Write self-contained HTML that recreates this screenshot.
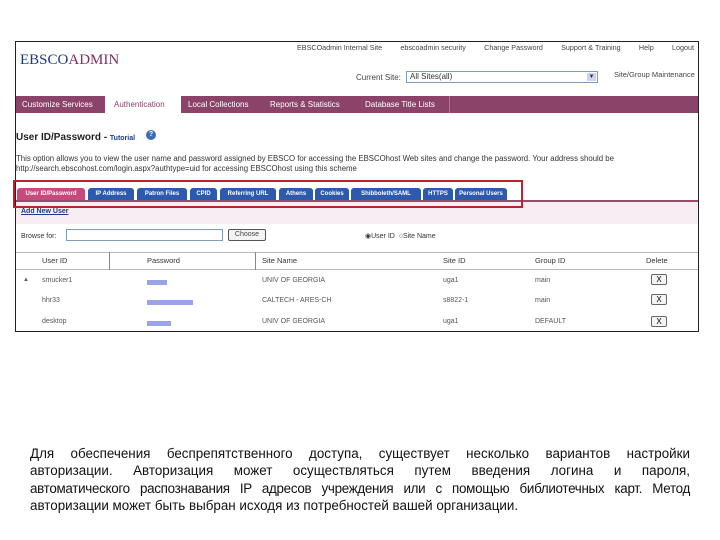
<!DOCTYPE html>
<html><head><meta charset="utf-8"><style>
*{margin:0;padding:0;box-sizing:border-box}
body{width:720px;height:540px;background:#fff;position:relative;font-family:"Liberation Sans",sans-serif;overflow:hidden}
.a{position:absolute;white-space:nowrap}
.f{position:absolute;left:15px;top:41px;width:684px;height:291px;border:1px solid #222;overflow:hidden}
.s{font-size:7.5px;color:#444}
.nav{position:absolute;left:0;top:54px;width:682px;height:17px;background:#8c4369}
.nav span{position:absolute;top:4px;font-size:8px;color:#fff}
.tab{position:absolute;top:146px;height:12px;background:#2c5aae;color:#fff;font-size:6px;font-weight:bold;text-align:center;line-height:12px;border-radius:3px 3px 0 0}
.th{font-size:7.5px;color:#333}
.td{font-size:7px;color:#555}
.x{position:absolute;width:16px;height:11px;border:1px solid #666;border-radius:2px;font-size:8px;text-align:center;line-height:9px;background:#f4f4f4}
.bl{position:absolute;height:5px;background:#9aa3e8}
.t{position:absolute;left:30px;width:660px;font-size:13.4px;color:#111;white-space:nowrap;text-align:justify;text-align-last:justify}
.top{position:absolute;left:281px;top:1px;width:397px;display:flex;justify-content:space-between;font-size:7.2px;color:#444;white-space:nowrap}
</style></head><body>
<div class="f">
 <div class="top"><span>EBSCOadmin Internal Site</span><span>ebscoadmin security</span><span>Change Password</span><span>Support &amp; Training</span><span>Help</span><span>Logout</span></div>
 <div class="a" style="left:4px;top:10px;font-family:'Liberation Serif',serif;font-size:15px;color:#1e3a7a">EBSCO<span style="color:#7a3060">ADMIN</span></div>
 <div class="a s" style="left:340px;top:31px;font-size:8px">Current Site:</div>
 <div class="a" style="left:390px;top:29px;width:192px;height:12px;border:1px solid #7f9db9;font-size:8px;color:#333;padding-left:3px;line-height:10px">All Sites(all)<span style="position:absolute;right:1px;top:1px;width:9px;height:8px;background:#c6d6f0;font-size:6px;text-align:center;line-height:8px">▼</span></div>
 <div class="a s" style="left:598px;top:28px;font-size:7.5px">Site/Group Maintenance</div>
 <div class="nav">
  <span style="left:6px">Customize Services</span>
  <div style="position:absolute;left:89px;top:0;width:76px;height:17px;background:#fff"></div>
  <span style="left:98px;color:#8c4369">Authentication</span>
  <span style="left:172px">Local Collections</span>
  <span style="left:254px">Reports &amp; Statistics</span>
  <span style="left:349px">Database Title Lists</span>
  <div style="position:absolute;left:433px;top:0;width:1px;height:17px;background:#b07090"></div>
 </div>
 <div class="a" style="left:0;top:90px;font-size:10px;font-weight:bold;color:#222">User ID/Password - <span style="font-size:7px;color:#1e3a8a">Tutorial</span></div>
 <div class="a" style="left:130px;top:88px;width:10px;height:10px;border-radius:50%;background:#3a6fb8;color:#fff;font-size:7px;text-align:center;line-height:10px;font-weight:bold">?</div>
 <div class="a s" style="left:0;top:112px;font-size:7.8px;color:#333">This option allows you to view the user name and password assigned by EBSCO for accessing the EBSCOhost Web sites and change the password. Your address should be</div>
 <div class="a s" style="left:0;top:122px;font-size:7.8px;color:#333">http://search.ebscohost.com/login.aspx?authtype=uid for accessing EBSCOhost using this scheme</div>
 <div style="position:absolute;left:0;top:158px;width:682px;height:2px;background:#9c4a6c"></div>
 <div style="position:absolute;left:0;top:160px;width:682px;height:22px;background:#f7eef4"></div>
 <div class="tab" style="left:1px;width:68px;background:#c84a7c">User ID/Password</div>
 <div class="tab" style="left:72px;width:46px">IP Address</div>
 <div class="tab" style="left:121px;width:50px">Patron Files</div>
 <div class="tab" style="left:174px;width:27px">CPID</div>
 <div class="tab" style="left:204px;width:56px">Referring URL</div>
 <div class="tab" style="left:263px;width:34px">Athens</div>
 <div class="tab" style="left:299px;width:34px">Cookies</div>
 <div class="tab" style="left:335px;width:70px">Shibboleth/SAML</div>
 <div class="tab" style="left:407px;width:30px">HTTPS</div>
 <div class="tab" style="left:439px;width:52px">Personal Users</div>
 <div class="a" style="left:5px;top:166px;font-size:7px;color:#1e3a8a;text-decoration:underline;font-weight:bold">Add New User</div>
 <div class="a" style="left:5px;top:191px;font-size:7px;color:#333">Browse for:</div>
 <div class="a" style="left:50px;top:187px;width:157px;height:12px;border:1px solid #7f9db9"></div>
 <div class="a" style="left:212px;top:187px;width:38px;height:12px;border:1px solid #555;border-radius:2px;font-size:7px;text-align:center;line-height:10px;color:#444;background:#f4f4f4">Choose</div>
 <div class="a" style="left:349px;top:190px;font-size:7px;color:#333">◉User ID &nbsp;○Site Name</div>
 <div style="position:absolute;left:0;top:210px;width:682px;height:1px;background:#bbb"></div>
 <div style="position:absolute;left:0;top:227px;width:682px;height:1px;background:#bbb"></div>
 <div style="position:absolute;left:93px;top:210px;width:1px;height:18px;background:#888"></div>
 <div style="position:absolute;left:239px;top:210px;width:1px;height:18px;background:#888"></div>
 <div class="a th" style="left:26px;top:214px">User ID</div>
 <div class="a th" style="left:131px;top:214px">Password</div>
 <div class="a th" style="left:246px;top:214px">Site Name</div>
 <div class="a th" style="left:427px;top:214px">Site ID</div>
 <div class="a th" style="left:519px;top:214px">Group ID</div>
 <div class="a th" style="left:630px;top:214px">Delete</div>
 <div class="a td" style="left:7px;top:235px;font-size:6px">▲</div>
 <div class="a td" style="left:26px;top:235px">smucker1</div>
 <div class="a td" style="left:26px;top:255px">hhr33</div>
 <div class="a td" style="left:26px;top:276px">desktop</div>
 <div class="bl" style="left:131px;top:238px;width:20px"></div>
 <div class="bl" style="left:131px;top:258px;width:46px"></div>
 <div class="bl" style="left:131px;top:279px;width:24px"></div>
 <div class="a td" style="left:246px;top:235px">UNIV OF GEORGIA</div>
 <div class="a td" style="left:246px;top:255px">CALTECH - ARES-CH</div>
 <div class="a td" style="left:246px;top:276px">UNIV OF GEORGIA</div>
 <div class="a td" style="left:427px;top:235px">uga1</div>
 <div class="a td" style="left:427px;top:255px">s8822-1</div>
 <div class="a td" style="left:427px;top:276px">uga1</div>
 <div class="a td" style="left:519px;top:235px">main</div>
 <div class="a td" style="left:519px;top:255px">main</div>
 <div class="a td" style="left:519px;top:276px">DEFAULT</div>
 <div class="x" style="left:635px;top:232px">X</div>
 <div class="x" style="left:635px;top:252px">X</div>
 <div class="x" style="left:635px;top:274px">X</div>
</div>
<div style="position:absolute;left:13px;top:180px;width:510px;height:28px;border:2px solid #c0202a"></div>
<div class="t" style="top:446px">Для обеспечения беспрепятственного доступа, существует несколько вариантов настройки</div>
<div class="t" style="top:463px">авторизации. Авторизация может осуществляться путем введения логина и пароля,</div>
<div class="t" style="top:481px;letter-spacing:-0.3px">автоматического распознавания IP адресов учреждения или с помощью библиотечных карт. Метод</div>
<div class="t" style="top:498px;text-align-last:left;text-align:left">авторизации может быть выбран исходя из потребностей вашей организации.</div>
</body></html>
